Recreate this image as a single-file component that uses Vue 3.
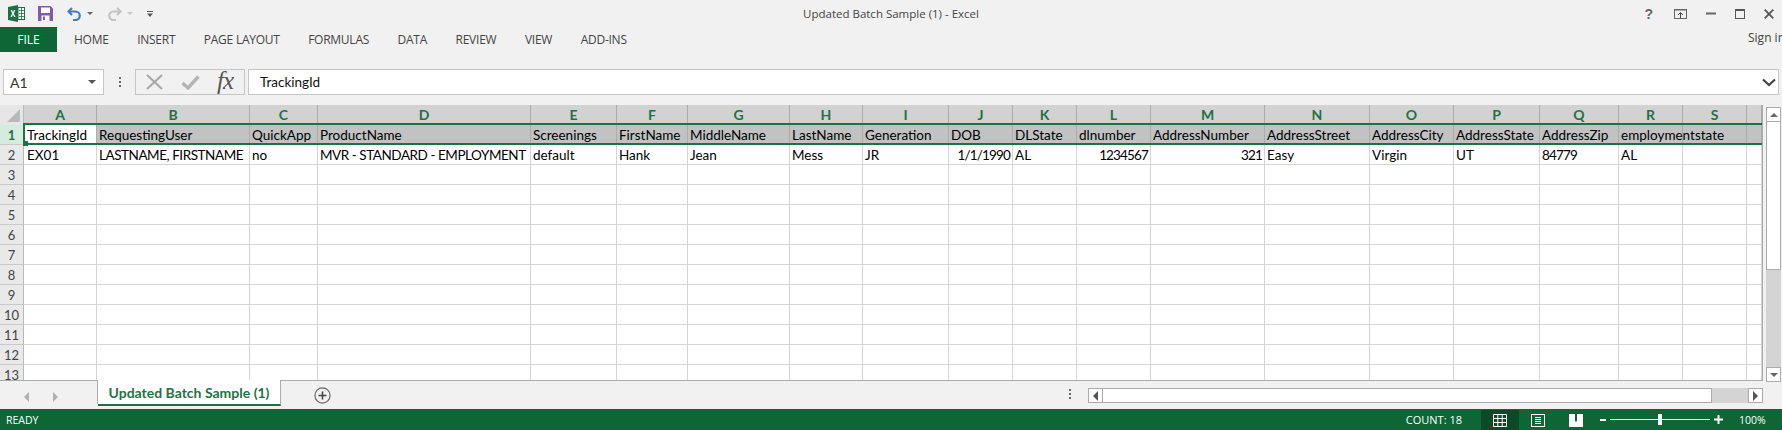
<script setup>
const tabs = ['HOME', 'INSERT', 'PAGE LAYOUT', 'FORMULAS', 'DATA', 'REVIEW', 'VIEW', 'ADD-INS']
const cols = [
  ['A', 73], ['B', 153], ['C', 68], ['D', 213], ['E', 86], ['F', 71], ['G', 102], ['H', 73], ['I', 86], ['J', 64],
  ['K', 64], ['L', 74], ['M', 114], ['N', 105], ['O', 84], ['P', 86], ['Q', 79], ['R', 64], ['S', 64], ['', 15]
]
const gridColumns = '24px ' + cols.map(c => c[1] + 'px').join(' ')
const head = ['TrackingId', 'RequestingUser', 'QuickApp', 'ProductName', 'Screenings', 'FirstName', 'MiddleName', 'LastName', 'Generation', 'DOB', 'DLState', 'dlnumber', 'AddressNumber', 'AddressStreet', 'AddressCity', 'AddressState', 'AddressZip', 'employmentstate', '', '']
const data = ['EX01', 'LASTNAME, FIRSTNAME', 'no', 'MVR - STANDARD - EMPLOYMENT', 'default', 'Hank', 'Jean', 'Mess', 'JR', '1/1/1990', 'AL', '1234567', '321', 'Easy', 'Virgin', 'UT', '84779', 'AL', '', '']
const rightAligned = [9, 11, 12]
const capsCells = [1, 3]
const digitCells = [9, 11, 12, 16]
const emptyRows = [3, 4, 5, 6, 7, 8, 9, 10, 11, 12, 13]
</script>

<template>
  <div class="app">
    <header class="titlebar">
      <div class="qat">
        <svg class="i-xl" width="17" height="17" viewBox="0 0 17 17">
          <path d="M0 2 10 0v17L0 15z" fill="#1d7044" />
          <rect x="10" y="2.5" width="6.5" height="12" fill="#fff" stroke="#1d7044" />
          <path d="M11 5.5h5M11 8.5h5M11 11.5h5M13.5 3v11" stroke="#1d7044" stroke-width=".8" />
          <path d="M2.6 5 4.2 8.4 2.4 12h1.5L5 9.6 6.1 12h1.500L5.800 8.400 7.400 5H6L5 7.200 4 5z" fill="#fff" />
        </svg>
        <svg class="i-save" width="15" height="15" viewBox="0 0 15 15">
          <path d="M0 0h12.500L15 2.500V15H0z" fill="#8159a8" />
          <rect x="3" y="1.500" width="9" height="5.500" fill="#fff" />
          <rect x="3.500" y="9.500" width="8" height="5.500" fill="#fff" />
          <rect x="5" y="10.500" width="2" height="3.500" fill="#8159a8" />
        </svg>
        <svg class="i-undo" width="15" height="14" viewBox="0 0 15 14">
          <path d="M5 1 1.500 4.500 5 8" fill="none" stroke="#3f7fb8" stroke-width="2.200" />
          <path d="M2 4.500h6.500a4.200 4.200 0 0 1 0 8.500H6" fill="none" stroke="#3f7fb8" stroke-width="2.200" />
        </svg>
        <i class="caret dark"></i>
        <svg class="i-redo" width="15" height="14" viewBox="0 0 15 14">
          <path d="M10 1l3.500 3.500L10 8" fill="none" stroke="#c3c3c3" stroke-width="2.200" />
          <path d="M13 4.500H6.500a4.200 4.200 0 0 0 0 8.500H9" fill="none" stroke="#c3c3c3" stroke-width="2.200" />
        </svg>
        <i class="caret light"></i>
        <svg class="i-custom" width="6" height="6" viewBox="0 0 6 6">
          <path d="M0 0h6v1H0zM0 2.500h6L3 6z" fill="#555" />
        </svg>
      </div>
      <div class="doc-title">Updated Batch Sample (1) - Excel</div>
      <div class="winctl">
        <span class="help">?</span>
        <svg width="13" height="10" viewBox="0 0 13 10"><rect x=".5" y=".5" width="12" height="9" fill="none" stroke="#666" /><path d="M0 .5h13" stroke="#666" stroke-width="2" /><path d="M6.500 9V4M4 6l2.500-2.500L9 6" fill="none" stroke="#444" /></svg>
        <svg width="10" height="3" viewBox="0 0 10 3"><rect width="10" height="2" y=".5" fill="#666" /></svg>
        <svg width="10" height="10" viewBox="0 0 10 10"><rect x=".5" y=".5" width="9" height="9" fill="none" stroke="#555" /><rect width="10" height="2" fill="#555" /></svg>
        <svg width="10" height="10" viewBox="0 0 10 10"><path d="M.7.700l8.600 8.600M9.300.700.700 9.300" stroke="#555" stroke-width="1.800" /></svg>
      </div>
    </header>

    <nav class="ribbon">
      <div class="file">FILE</div>
      <div v-for="t in tabs" :key="t" class="tab">{{ t }}</div>
      <div class="signin">Sign in</div>
    </nav>

    <section class="formula">
      <div class="namebox"><span>A1</span><i class="caret dark big"></i></div>
      <div class="dots"><i></i><i></i><i></i></div>
      <div class="fxbox">
        <svg class="f-x" width="17" height="16" viewBox="0 0 17 16"><path d="M1 1l15 14M16 1 1 15" stroke="#a9a9a9" stroke-width="2.200" /></svg>
        <svg class="f-c" width="19" height="15" viewBox="0 0 19 15"><path d="M1.500 8 7 13 17.500 1.500" fill="none" stroke="#b4b4b4" stroke-width="3.400" /></svg>
        <span class="fx">fx</span>
      </div>
      <div class="input">
        <span>TrackingId</span>
        <svg width="14" height="9" viewBox="0 0 14 9"><path d="M1 1.500 7 7l6-5.500" fill="none" stroke="#444" stroke-width="2.200" /></svg>
      </div>
    </section>

    <section class="sheet-wrap">
      <div class="sheet">
        <div class="grid" :style="{ gridTemplateColumns: gridColumns }">
          <div class="corner"><i></i></div>
          <div v-for="c in cols" :key="'h' + c[0]" class="col-h">{{ c[0] }}</div>

          <div class="row-h active">1</div>
          <div v-for="(v, i) in head" :key="'a' + i" class="cell hd" :class="{ first: i === 0 }"><span>{{ v }}</span></div>

          <div class="row-h">2</div>
          <div
            v-for="(v, i) in data"
            :key="'b' + i"
            class="cell"
            :class="{ first: i === 0, num: rightAligned.includes(i), caps: capsCells.includes(i), digits: digitCells.includes(i) }"
          ><span>{{ v }}</span></div>

          <template v-for="r in emptyRows" :key="'r' + r">
            <div class="row-h">{{ r }}</div>
            <div v-for="(c, i) in cols" :key="r + '-' + i" class="cell"></div>
          </template>
        </div>
        <div class="selection"><i></i></div>
      </div>
      <div class="vscroll">
        <div class="sbtn"><i class="tri up"></i></div>
        <div class="vthumb"></div>
        <div class="vtrack"></div>
        <div class="sbtn"><i class="tri down"></i></div>
      </div>
    </section>

    <section class="tabbar">
      <div class="navs"><i class="tri left"></i><i class="tri right"></i></div>
      <div class="sheet-tab">Updated Batch Sample (1)</div>
      <svg class="plus" width="17" height="17" viewBox="0 0 17 17"><circle cx="8.500" cy="8.500" r="7.600" fill="none" stroke="#666" stroke-width="1.200" /><path d="M4.500 8.500h8M8.500 4.500v8" stroke="#444" stroke-width="1.600" /></svg>
      <div class="dots small"><i></i><i></i><i></i></div>
      <div class="hscroll">
        <div class="hbtn"><i class="tri left dark"></i></div>
        <div class="hthumb"></div>
        <div class="htrack"></div>
        <div class="hbtn"><i class="tri right dark"></i></div>
      </div>
    </section>

    <footer class="status">
      <span class="ready">READY</span>
      <span class="count">COUNT: 18</span>
      <div class="view on">
        <svg width="14" height="13" viewBox="0 0 14 13"><path d="M.5.500h13v12H.500zM.5 4.500h13M.5 8.500h13M4.800.500v12M9.200.500v12" fill="none" stroke="#fff" /></svg>
      </div>
      <div class="view">
        <svg width="14" height="13" viewBox="0 0 14 13"><rect x=".5" y=".5" width="13" height="12" fill="none" stroke="#fff" /><path d="M4 3.500h6M4 5.500h6M4 7.500h6M4 9.500h6" stroke="#fff" /></svg>
      </div>
      <div class="view">
        <svg width="14" height="13" viewBox="0 0 14 13"><path d="M0 0h6v7.500H8V0h6v13H0z" fill="#fff" /></svg>
      </div>
      <div class="zoom">
        <i class="minus"></i>
        <div class="slider"><i></i></div>
        <svg width="9" height="9" viewBox="0 0 9 9"><path d="M0 4.500h9M4.500 0v9" stroke="#fff" stroke-width="2" /></svg>
      </div>
      <span class="pct">100%</span>
    </footer>
  </div>
</template>

<style scoped>
.app {
  width: 1782px;
  height: 430px;
  overflow: hidden;
  background: #f1f1f1;
  display: flex;
  flex-direction: column;
  font-family: "Open Sans", "Liberation Sans", sans-serif;
  color: #444;
}
.titlebar {
  height: 27px;
  display: grid;
  grid-template-columns: 1fr auto 1fr;
  align-items: center;
}
.qat {
  display: flex;
  align-items: center;
  padding-left: 8px;
}
.i-save { margin-left: 13px; }
.i-undo { margin-left: 14px; }
.caret {
  width: 0;
  height: 0;
  border-left: 3px solid transparent;
  border-right: 3px solid transparent;
  border-top: 3px solid #666;
  margin-left: 5px;
}
.caret.light { border-top-color: #c6c6c6; }
.caret.big { border-left-width: 4px; border-right-width: 4px; border-top-width: 4px; border-top-color: #555; margin-left: 0; }
.i-redo { margin-left: 14px; }
.i-custom { margin-left: 14px; }
.doc-title {
  font-size: 11.500px;
  color: #444;
  white-space: nowrap;
}
.winctl {
  display: flex;
  align-items: center;
  justify-content: flex-end;
  gap: 19px;
  padding-right: 8px;
}
.help {
  font: bold 14px "Liberation Sans", sans-serif;
  color: #666;
  margin-right: 2px;
}
.ribbon {
  height: 25px;
  display: flex;
  align-items: center;
  position: relative;
  font-size: 12px;
  letter-spacing: -.25px;
}
.file {
  width: 57px;
  height: 25px;
  background: #0e6636;
  color: #fff;
  display: flex;
  align-items: center;
  justify-content: center;
  font-size: 12px;
  letter-spacing: 0;
}
.tab {
  color: #444;
  margin-left: 28.500px;
  white-space: nowrap;
}
.file + .tab { margin-left: 17px; }
.signin {
  position: absolute;
  left: 1748px;
  top: 2px;
  font-size: 12px;
  letter-spacing: 0;
  white-space: nowrap;
}
.formula {
  height: 26px;
  margin-top: 17px;
  display: flex;
  align-items: stretch;
  padding: 0 3px 0 3px;
}
.namebox {
  width: 101px;
  background: #fff;
  border: 1px solid #c6c6c6;
  box-sizing: border-box;
  display: flex;
  align-items: center;
  justify-content: space-between;
  padding: 0 7px 0 6px;
  font: 14px Lato, "Liberation Sans", sans-serif;
  color: #333;
}
.dots {
  width: 31px;
  display: flex;
  flex-direction: column;
  align-items: center;
  justify-content: center;
  gap: 2px;
}
.dots i {
  width: 2px;
  height: 2px;
  background: #666;
}
.fxbox {
  width: 110px;
  background: #f1f1f1;
  border: 1px solid #c6c6c6;
  box-sizing: border-box;
  display: flex;
  align-items: center;
  padding-left: 10px;
}
.f-c { margin-left: 18px; }
.fx {
  font: italic 25px "Liberation Serif", serif;
  letter-spacing: -1px;
  color: #555;
  margin-left: 17px;
  margin-top: -2px;
}
.input {
  flex: 1;
  margin-left: 3px;
  background: #fff;
  border: 1px solid #c6c6c6;
  box-sizing: border-box;
  display: flex;
  align-items: center;
  justify-content: space-between;
  padding: 0 2px 0 11px;
  font: 13.500px Lato, "Liberation Sans", sans-serif;
  color: #111;
}
.sheet-wrap {
  height: 276px;
  margin-top: 10px;
  display: flex;
}
.sheet {
  width: 1763px;
  height: 276px;
  box-sizing: border-box;
  border-bottom: 1px solid #ababab;
  border-right: 1px solid #ababab;
  overflow: hidden;
  position: relative;
  background: #fff;
}
.grid {
  display: grid;
  grid-template-rows: 20px;
  grid-auto-rows: 20px;
}
.corner {
  background: #e6e6e6;
  border-right: 1px solid #b8b8b8;
  position: relative;
}
.corner i {
  position: absolute;
  right: 3px;
  bottom: 3px;
  border-left: 13px solid transparent;
  border-bottom: 13px solid #b9b9b9;
}
.col-h {
  background: #d2d2d2;
  border-right: 1px solid #ababab;
  display: flex;
  align-items: center;
  justify-content: center;
  padding-bottom: 2px;
  font: bold 14px Lato, "Liberation Sans", sans-serif;
  color: #1f7145;
}
.row-h {
  background: #e9e9e9;
  border-right: 1px solid #b8b8b8;
  border-bottom: 1px solid #c9c9c9;
  display: flex;
  align-items: center;
  justify-content: center;
  font: 13px Lato, "Liberation Sans", sans-serif;
  color: #444;
}
.row-h.active {
  background: #d3ecdd;
  color: #1f7145;
  font-weight: bold;
}
.cell {
  border-right: 1px solid #d4d4d4;
  border-bottom: 1px solid #d4d4d4;
  padding: 0 2px 0 2px;
  display: flex;
  align-items: center;
  white-space: nowrap;
  font: 13.500px Lato, "Liberation Sans", sans-serif;
  color: #000;
  min-width: 0;
}
.cell span {
  position: relative;
  z-index: 1;
}
.cell.first { padding-left: 3px; }
.cell.num { justify-content: flex-end; }
.cell.caps { letter-spacing: -.45px; }
.cell.digits { letter-spacing: -.85px; }
.cell.hd {
  background: #c2c2c2;
  border-right-color: #acacac;
  border-bottom: 0;
}
.cell.hd.first { background: #fff; }
.selection {
  position: absolute;
  left: 23px;
  top: 18px;
  width: 1741px;
  height: 22px;
  box-sizing: border-box;
  border: 2px solid #1f7145;
  z-index: 2;
  pointer-events: none;
}
.selection i {
  position: absolute;
  left: -2px;
  bottom: -3px;
  width: 5px;
  height: 5px;
  background: #1f7145;
}
.vscroll {
  width: 15px;
  margin-left: 3px;
  margin-top: 2px;
  display: flex;
  flex-direction: column;
  height: 275px;
}
.sbtn {
  height: 15px;
  flex: none;
  box-sizing: border-box;
  background: #fff;
  border: 1px solid #ababab;
  display: flex;
  align-items: center;
  justify-content: center;
}
.vthumb {
  height: 148px;
  flex: none;
  background: #fff;
  border: 1px solid #ababab;
  border-top: 0;
  box-sizing: border-box;
}
.vtrack {
  flex: 1;
  background: #d4d4d4;
}
.tri {
  display: block;
  width: 0;
  height: 0;
}
.tri.up { border: 4px solid transparent; border-top: 0; border-bottom: 4px solid #666; }
.tri.down { border: 4px solid transparent; border-bottom: 0; border-top: 4px solid #666; }
.tri.left { border: 5px solid transparent; border-left: 0; border-right: 5px solid #b0b0b0; }
.tri.right { border: 5px solid transparent; border-right: 0; border-left: 5px solid #b0b0b0; }
.tri.left.dark { border-right-color: #555; }
.tri.right.dark { border-left-color: #555; }
.tabbar {
  height: 28px;
  display: flex;
  align-items: flex-start;
  position: relative;
}
.navs {
  width: 98px;
  display: flex;
  align-items: center;
  gap: 24px;
  padding: 9px 0 0 24px;
  box-sizing: border-box;
  flex: none;
  height: 23px;
  border-right: 1px solid #ababab;
}
.sheet-tab {
  width: 182px;
  height: 23px;
  margin-top: -1px;
  flex: none;
  background: #fff;
  border-bottom: 2px solid #1f7145;
  box-sizing: content-box;
  display: flex;
  align-items: center;
  justify-content: center;
  font: bold 14px Lato, "Liberation Sans", sans-serif;
  color: #1f7145;
  padding-top: 1px;
  border-right: 1px solid #ababab;
}
.plus {
  margin: 6px 0 0 33px;
  flex: none;
}
.dots.small {
  position: absolute;
  left: 1067px;
  top: 8px;
  width: 6px;
}
.hscroll {
  position: absolute;
  left: 1088px;
  top: 7px;
  width: 675px;
  height: 15px;
  display: flex;
}
.hbtn {
  width: 15px;
  height: 15px;
  flex: none;
  box-sizing: border-box;
  background: #fff;
  border: 1px solid #ababab;
  display: flex;
  align-items: center;
  justify-content: center;
}
.hthumb {
  width: 609px;
  flex: none;
  box-sizing: border-box;
  background: #fff;
  border: 1px solid #ababab;
  border-left: 0;
}
.htrack {
  flex: 1;
  background: #d4d4d4;
}
.status {
  height: 21px;
  background: #0e6636;
  color: #fff;
  display: flex;
  align-items: center;
  font-size: 10.500px;
}
.ready { margin-left: 6px; }
.count { margin-left: auto; margin-right: 19px; font-size: 11px; }
.view {
  width: 38px;
  height: 20px;
  display: flex;
  align-items: center;
  justify-content: center;
  margin-top: 1px;
}
.view.on { background: #0a4a27; }
.zoom {
  display: flex;
  align-items: center;
  margin-left: 5px;
}
.minus {
  width: 6px;
  height: 2px;
  background: #fff;
}
.slider {
  width: 100px;
  height: 1px;
  background: #fff;
  margin: 0 4px 0 4px;
  position: relative;
}
.slider i {
  position: absolute;
  left: 48px;
  top: -5px;
  width: 4px;
  height: 11px;
  background: #fff;
}
.pct { width: 26px; margin-left: 16px; margin-right: 17px; white-space: nowrap; }
</style>
